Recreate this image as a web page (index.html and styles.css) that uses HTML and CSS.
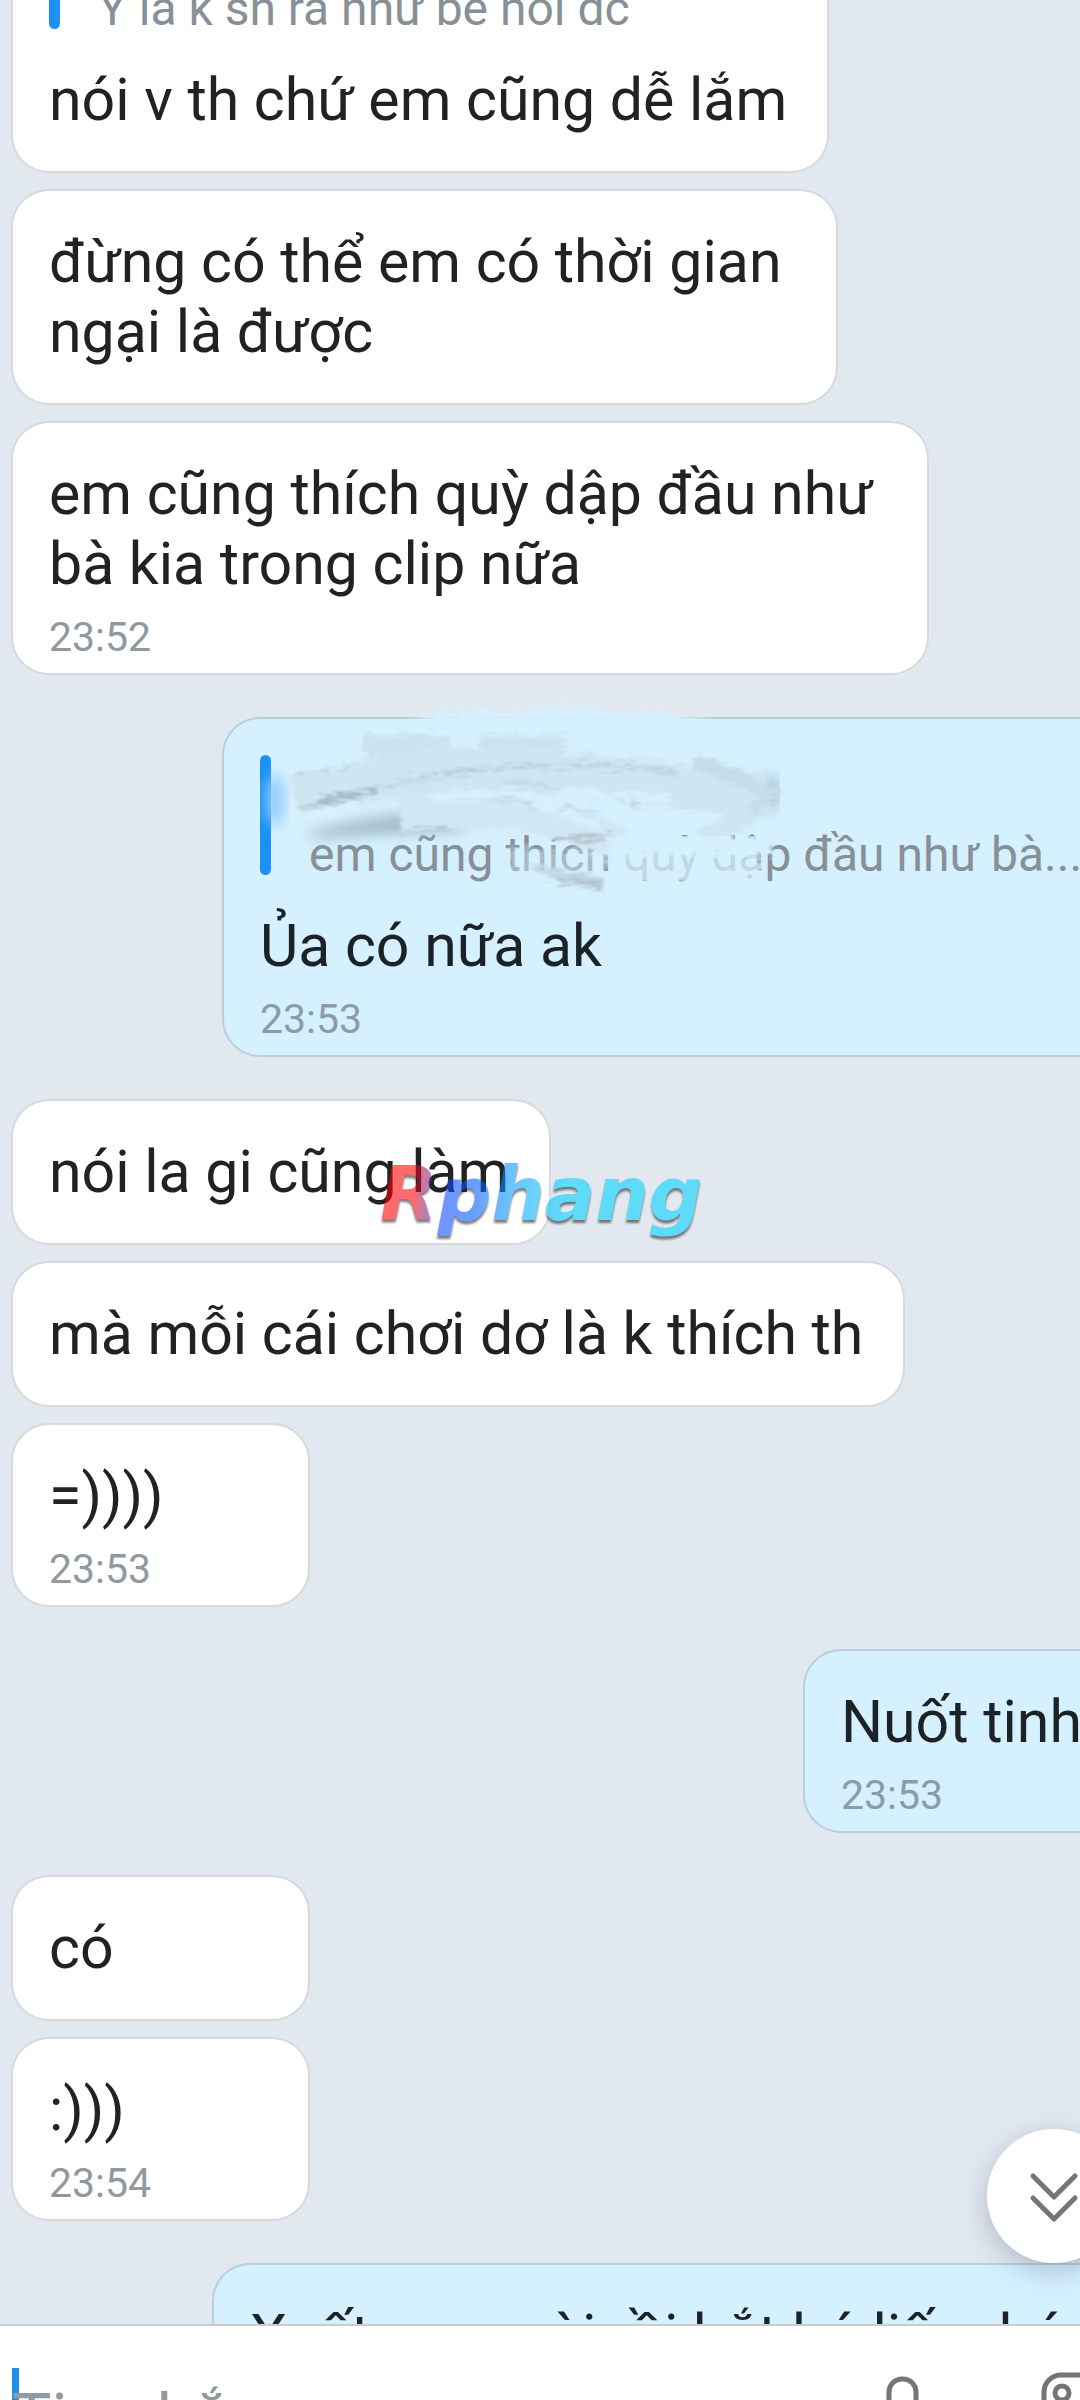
FILE: index.html
```html
<!DOCTYPE html>
<html lang="vi">
<head>
<meta charset="utf-8">
<meta name="viewport" content="width=device-width, initial-scale=1">
<title>Tin nhắn</title>
<link rel="stylesheet" href="styles.css">
</head>
<body>
<main class="chat">
  <section class="group group-scrolled">
    <article class="bubble">
      <blockquote class="quote"><p class="preview">Ý là k sh ra như bé nói dc</p></blockquote>
      <p class="text">nói v th chứ em cũng dễ lắm</p>
    </article>
    <article class="bubble wrapped">
      <p class="text">đừng có thể em có thời gian<br>ngại là được</p>
    </article>
    <article class="bubble wrapped timed">
      <p class="text">em cũng thích quỳ dập đầu như<br>bà kia trong clip nữa</p>
      <time class="time">23:52</time>
    </article>
  </section>

  <section class="group sent">
    <article class="bubble timed with-quote">
      <blockquote class="quote"><p class="preview">em cũng thích quỳ dập đầu như bà...</p></blockquote>
      <p class="text">Ủa có nữa ak</p>
      <time class="time">23:53</time>
      <svg class="smudge" viewBox="224 697 580 200" aria-hidden="true">
        <defs>
          <filter id="soft" x="-30%" y="-60%" width="160%" height="220%"><feGaussianBlur stdDeviation="7"/></filter>
          <filter id="edge" x="-10%" y="-30%" width="120%" height="160%"><feTurbulence type="fractalNoise" baseFrequency="0.04 0.5" numOctaves="3" seed="4" result="n"/><feDisplacementMap in="SourceGraphic" in2="n" scale="22" xChannelSelector="R" yChannelSelector="G" result="d"/><feGaussianBlur in="d" stdDeviation="1"/></filter>
        </defs>
        <path d="M402 724Q450 704 500 714Q560 702 620 712Q680 710 716 726Z" fill="#d5f0ff" filter="url(#edge)"/>
        <ellipse cx="275" cy="800" rx="9" ry="26" fill="#8fcaff" filter="url(#soft)"/>
        <path d="M310 832Q390 810 465 812V830Q390 834 310 838Z" fill="#a2bac7" filter="url(#soft)"/>
        <path d="M764 776H776V806L764 812Z" fill="#9db8c6" filter="url(#soft)"/>
        <g filter="url(#edge)" fill="none">
          <path d="M362 745H450M480 746H565" stroke="#cbe3ee" stroke-width="22"/>
          <path d="M294 800Q420 760 560 774T765 796" stroke="#cee6f2" stroke-width="44"/>
          <path d="M400 814Q530 800 620 845" stroke="#d0e8f4" stroke-width="36"/>
          <path d="M690 790L754 812L700 840" stroke="#cee6f2" stroke-width="20"/>
          <path d="M300 808Q380 788 430 776Q560 756 678 772" stroke="#bad1dc" stroke-width="4"/>
          <path d="M318 802L378 790" stroke="#a8bfca" stroke-width="8"/>
          <path d="M290 776L350 766M470 796L600 812M500 779L640 804" stroke="#c0d8e4" stroke-width="3"/>
          <path d="M694 760L770 792L752 812" stroke="#c6dde8" stroke-width="14"/>
          <path d="M430 796L520 794L600 828M290 818L360 804M560 792L670 800" stroke="#d8f1fc" stroke-width="8"/>
          <path d="M556 838H608" stroke="#b4c4cd" stroke-width="7"/>
          <path d="M530 864L600 880L600 888L560 880Z" fill="#b0c3ce" stroke="#b6c9d3" stroke-width="4"/>
        </g>
        <g filter="url(#edge)" fill="none" stroke="#d5f0ff">
          <path d="M610 845H772" stroke-width="20"/>
          <path d="M616 872H762" stroke-width="36" opacity=".74"/>
          <path d="M508 860L608 866" stroke-width="28" opacity=".45"/>
        </g>
      </svg>
    </article>
  </section>

  <section class="group">
    <article class="bubble"><p class="text">nói la gi cũng làm</p></article>
    <article class="bubble"><p class="text">mà mỗi cái chơi dơ là k thích th</p></article>
    <article class="bubble timed">
      <p class="text">=))))</p>
      <time class="time">23:53</time>
    </article>
    <svg class="watermark" viewBox="0 0 340 100" role="img" aria-label="Rphang">
      <defs>
        <linearGradient id="brand" gradientUnits="userSpaceOnUse" x1="8" y1="0" x2="328" y2="20">
          <stop offset="0" stop-color="#f00"/><stop offset=".11" stop-color="#f00"/>
          <stop offset=".2" stop-color="#0a48ff"/><stop offset=".3" stop-color="#0058ff"/>
          <stop offset=".42" stop-color="#009cff"/><stop offset=".58" stop-color="#00d2ff"/>
        </linearGradient>
      </defs>
      <text class="wordmark" x="8" y="68" fill="url(#brand)">Rphang</text>
    </svg>
  </section>

  <section class="group sent">
    <article class="bubble timed short">
      <p class="text">Nuốt tinh</p>
      <time class="time">23:53</time>
    </article>
  </section>

  <section class="group">
    <article class="bubble"><p class="text">có</p></article>
    <article class="bubble timed">
      <p class="text">:)))</p>
      <time class="time">23:54</time>
    </article>
  </section>

  <section class="group sent">
    <article class="bubble long"><p class="text">Xuất ra ngoài rồi bắt bú liếm bú</p></article>
  </section>

  <button class="jump" type="button" aria-label="Xuống cuối">
    <svg viewBox="0 0 134 134" fill="none" stroke="#757575" stroke-width="5" stroke-linecap="round" stroke-linejoin="round"><path d="M46 47l21 21 21-21M46 69l21 21 21-21"/></svg>
  </button>
</main>

<form class="composer">
  <span class="caret"></span>
  <input class="entry" type="text" placeholder="Tin nhắn" aria-label="Tin nhắn">
  <button class="tool" type="button" aria-label="Ghi âm">
    <svg viewBox="0 0 80 80" fill="none" stroke="#757575" stroke-width="5"><rect x="27" y="8" width="27" height="46" rx="13"/><path d="M16 42a24 24 0 0 0 48 0M40 66v12"/></svg>
  </button>
  <button class="tool" type="button" aria-label="Hình ảnh">
    <svg viewBox="0 0 80 80" fill="none" stroke="#757575" stroke-width="5"><rect x="5" y="4" width="70" height="70" rx="17"/><circle cx="23" cy="22" r="7"/><path d="M5 62l24-20 16 14 14-12 16 14"/></svg>
  </button>
</form>
</body>
</html>
```
FILE: styles.css
```css
* { box-sizing: border-box; }
body {
  margin: 0;
  height: 100vh;
  display: flex;
  flex-direction: column;
  overflow: hidden;
  background: #e2e8f0;
  color: #222;
  font-family: Roboto, "Noto Sans", sans-serif;
}
p, blockquote { margin: 0; }

.chat {
  position: relative;
  flex: 1;
  min-height: 0;
  overflow: hidden;
  display: flex;
  flex-direction: column;
  gap: 42px;
  padding: 0 0 0 11px;
}
.group {
  position: relative;
  flex: none;
  display: flex;
  flex-direction: column;
  align-items: flex-start;
  gap: 16px;
}
.group-scrolled { margin-top: -129px; }

.bubble {
  position: relative;
  min-width: 299px;
  padding: 36px 40px 36px 36px;
  border: 2px solid #d7d9dc;
  border-radius: 38px;
  background: #fff;
}
.wrapped { padding-right: 54px; }
.timed { padding-bottom: 11px; }
.text {
  font-size: 59px;
  line-height: 70px;
  white-space: nowrap;
}
.time {
  display: block;
  margin-top: 14px;
  font-size: 41px;
  line-height: 49px;
  color: #9099a0;
}

.quote {
  height: 120px;
  margin-bottom: 36px;
  display: flex;
  align-items: flex-end;
  gap: 38px;
}
.quote::before {
  content: "";
  flex: none;
  width: 11px;
  height: 120px;
  border-radius: 6px;
  background: #1a91f5;
}
.preview {
  font-size: 48px;
  line-height: 40px;
  white-space: nowrap;
  color: #879097;
}

.sent { align-items: flex-end; }
.sent .bubble {
  margin-right: -48px;
  border-color: #bacfda;
  background: #d5f0ff;
  color: #1b2327;
}
.sent .time { color: #8b9ba7; }
.sent .with-quote { width: 906px; }
.sent .short { width: 325px; }
.sent .long { width: 916px; }

.smudge {
  position: absolute;
  left: 0;
  top: -22px;
  width: 580px;
  height: 200px;
}
.watermark {
  position: absolute;
  left: 361px;
  top: 53px;
  width: 340px;
  height: 100px;
  opacity: .58;
  filter: drop-shadow(0 3px 1px #222);
}
.wordmark { font: italic bold 75px "DejaVu Sans", sans-serif; }

.jump {
  position: absolute;
  right: -41px;
  bottom: 61px;
  width: 134px;
  height: 134px;
  padding: 0;
  border: 0;
  border-radius: 50%;
  background: #fff;
  box-shadow: 0 8px 28px rgba(60, 80, 110, .3);
}
.jump svg { display: block; width: 100%; }

.composer {
  flex: none;
  height: 76px;
  overflow: hidden;
  display: flex;
  align-items: flex-start;
  gap: 97px;
  margin-right: -39px;
  padding: 42px 0 0 12px;
  border-top: 2px solid #c8ccd0;
  background: #fff;
}
.caret {
  flex: none;
  width: 7px;
  height: 80px;
  margin-right: -104px;
  background: #1e90ec;
}
.entry {
  flex: 1;
  min-width: 0;
  height: 102px;
  padding: 0;
  border: 0;
  outline: 0;
  background: none;
  font: 66px/102px Roboto, "Noto Sans", sans-serif;
}
.entry::placeholder { color: #8f9aa2; opacity: 1; }
.tool {
  flex: none;
  width: 80px;
  height: 80px;
  margin-top: 3px;
  padding: 0;
  border: 0;
  background: none;
}
.tool svg { display: block; width: 100%; }
```
